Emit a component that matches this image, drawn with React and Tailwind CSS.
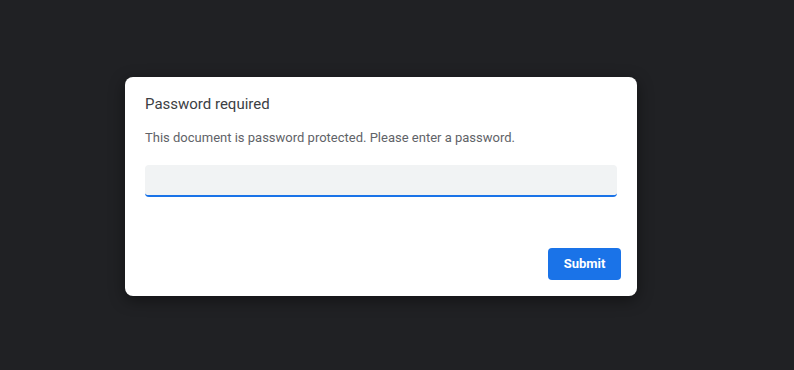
export default function App() {
  return (
    <div
      className="min-h-screen w-full bg-[#202124] flex items-center justify-center pr-[32px] pt-[3px]"
      style={{ fontFamily: "Roboto, 'Noto Sans', sans-serif" }}
    >
      <div className="w-[512px] h-[219px] bg-white rounded-[8px] shadow-[0_4px_16px_rgba(0,0,0,0.45)] flex flex-col pt-[17px] pl-[20px] pr-[16px] pb-[16px]">
        {/* Title */}
        <h2 className="text-[15px] leading-[20px] text-[#3c4043]">Password required</h2>

        {/* Message */}
        <p className="mt-[14px] text-[13px] leading-[20px] text-[#5f6368]">
          This document is password protected. Please enter a password.
        </p>

        {/* Password field */}
        <input
          type="password"
          className="mt-[17px] mr-[4px] h-[32px] bg-[#f1f3f4] rounded-[4px] border-b-2 border-[#1a73e8] px-2 text-[13px] outline-none"
        />

        {/* Actions */}
        <div className="mt-auto flex justify-end">
          <button className="w-[73px] h-[32px] rounded-[4px] bg-[#1a73e8] text-white text-[13px] font-bold">
            Submit
          </button>
        </div>
      </div>
    </div>
  );
}
